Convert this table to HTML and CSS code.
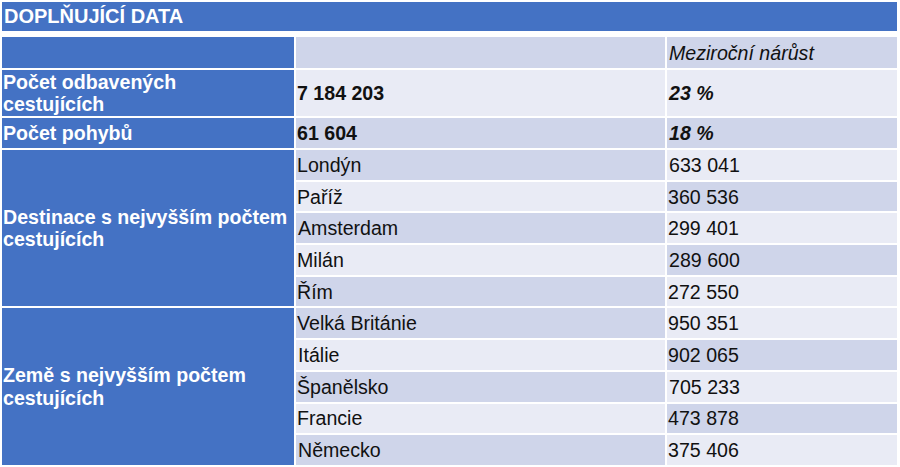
FILE: index.html
```html
<!DOCTYPE html>
<html lang="cs">
<head>
<meta charset="utf-8">
<title>Doplňující data</title>
<link rel="stylesheet" href="styles.css">
</head>
<body>
<div class="page">
  <div class="title">DOPLŇUJÍCÍ DATA</div>
  <div class="table">
    <div class="lab r1"></div>
    <div class="cell d"></div>
    <div class="cell d it">Meziroční nárůst</div>

    <div class="lab r2">Počet odbavených<br>cestujících</div>
    <div class="cell l b">7 184 203</div>
    <div class="cell l b it">23 %</div>

    <div class="lab r3">Počet pohybů</div>
    <div class="cell d b">61 604</div>
    <div class="cell d b it">18 %</div>

    <div class="lab g1">Destinace s nejvyšším počtem cestujících</div>
    <div class="cell d">Londýn</div>
    <div class="cell l">633 041</div>
    <div class="cell l">Paříž</div>
    <div class="cell d">360 536</div>
    <div class="cell d">Amsterdam</div>
    <div class="cell l">299 401</div>
    <div class="cell l">Milán</div>
    <div class="cell d">289 600</div>
    <div class="cell d">Řím</div>
    <div class="cell l">272 550</div>

    <div class="lab g2">Země s nejvyšším počtem cestujících</div>
    <div class="cell d">Velká Británie</div>
    <div class="cell l">950 351</div>
    <div class="cell l">Itálie</div>
    <div class="cell d">902 065</div>
    <div class="cell d">Španělsko</div>
    <div class="cell l">705 233</div>
    <div class="cell l">Francie</div>
    <div class="cell d">473 878</div>
    <div class="cell d">Německo</div>
    <div class="cell l">375 406</div>
  </div>
</div>
</body>
</html>
```

FILE: styles.css
```css
html, body {
  margin: 0;
  padding: 0;
  background: #ffffff;
}

body {
  font-family: "Liberation Sans", Arial, sans-serif;
  color: #111111;
}

.page {
  width: 895px;
  padding: 2px 0 0 2px;
}

.title {
  height: 29px;
  background: #4472C4;
  color: #ffffff;
  font-weight: bold;
  font-size: 20px;
  line-height: 29px;
  padding-left: 2px;
  margin-bottom: 6px;
}

.table {
  display: grid;
  grid-template-columns: 292px 369px 230px;
  grid-template-rows: 31px 46px 30px repeat(10, 29.7px);
  gap: 2px;
  background: #ffffff;
}

.lab {
  background: #4472C4;
  color: #ffffff;
  font-weight: bold;
  font-size: 19.6px;
  line-height: 22.5px;
  padding-left: 1px;
  display: flex;
  align-items: center;
  grid-column: 1;
}

.r1 { grid-row: 1; }
.r2 { grid-row: 2; }
.r3 { grid-row: 3; }
.g1 { grid-row: 4 / span 5; }
.g2 { grid-row: 9 / span 5; }

.cell {
  font-size: 19.6px;
  line-height: 22px;
  padding-left: 1px;
  display: flex;
  align-items: center;
  color: #111111;
}

.cell:nth-child(3n) { padding-left: 2px; }

.d { background: #CFD5EA; }
.l { background: #E9EBF5; }
.b { font-weight: bold; }
.it { font-style: italic; }
```
